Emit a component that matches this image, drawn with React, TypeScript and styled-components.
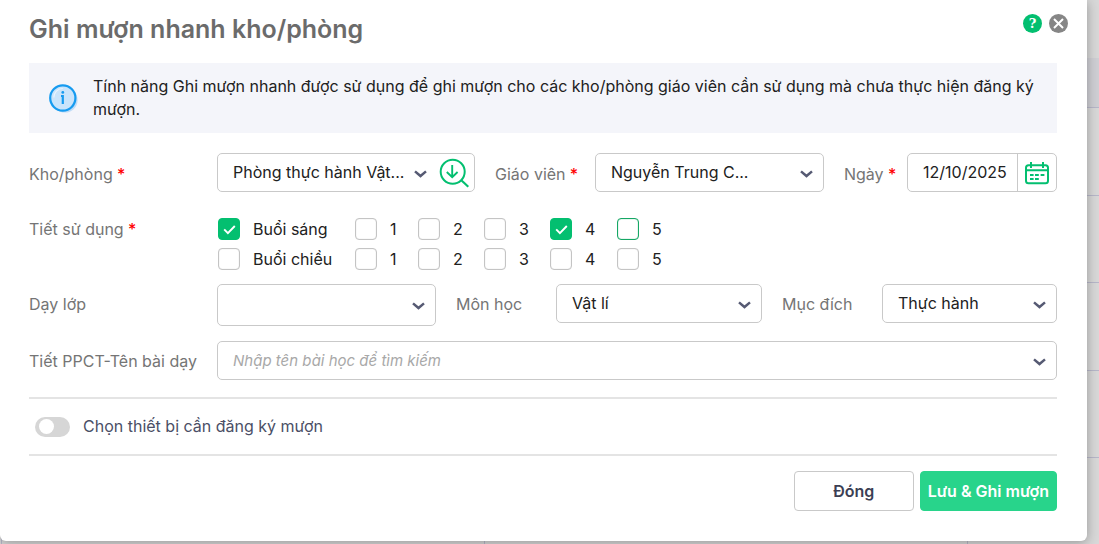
import React, { useState } from 'react';
import styled, { createGlobalStyle, css } from 'styled-components';

const green = '#03bf70';

const GlobalStyle = createGlobalStyle`
  *, *::before, *::after { box-sizing: border-box; }
  body {
    margin: 0;
    background: #d8d8d8;
    color: #212121;
    font: 16px/22px Inter, "Noto Sans", sans-serif;
  }
  button, input, select { font: inherit; color: inherit; }
`;

const Page = styled.div`
  display: grid;
  min-height: 100vh;
  grid-template-columns: minmax(0, 1fr);
  align-items: start;

  > * { grid-area: 1 / 1; }
`;

const Backdrop = styled.div`
  height: 100vh;
  padding-top: 58px;
  overflow: hidden;
`;

const BackdropHeader = styled.div`
  height: 50px;
  background: #cfcfd4;
  border-bottom: 1px solid #b7b7c9;
`;

const BackdropRow = styled.div`
  display: flex;
  height: 88px;
  padding-left: 1px;
  border-bottom: 1px solid #b7b7c9;

  &:nth-child(odd) { height: 87px; }
`;

const BackdropCell = styled.div`
  flex: 0 0 44%;
  border-left: 1px solid #b7b7c9;
`;

const Dialog = styled.form`
  position: relative;
  margin-right: 12px;
  padding: 12px 30px 30px 29px;
  background: #fff;
  border-radius: 0 0 6px 6px;
  box-shadow: 0 2px 12px rgba(0, 0, 0, 0.3);
`;

const Header = styled.header`
  display: flex;
  align-items: flex-start;
  justify-content: space-between;
  height: 51px;
`;

const Title = styled.h1`
  margin: 0;
  color: #6b6b6b;
  font-size: 25px;
  line-height: 34px;
  font-weight: 600;
`;

const HeaderActions = styled.div`
  display: flex;
  gap: 7px;
  padding-top: 2px;
  margin-right: -11px;
`;

const RoundButton = styled.button<{ $color: string }>`
  display: grid;
  place-items: center;
  width: 19px;
  height: 19px;
  padding: 0;
  border: 0;
  border-radius: 50%;
  background: ${(p) => p.$color};
  color: #fff;
  font: bold 13px/19px "DejaVu Serif", serif;
`;

const Notice = styled.section`
  display: flex;
  align-items: center;
  gap: 14px;
  padding: 12px 20px 12px 20px;
  background: #f4f5fa;

  svg { flex: none; }
`;

const NoticeText = styled.p`
  margin: 0;
  line-height: 23px;
`;

const FieldRow = styled.div<{ $columns: string }>`
  display: grid;
  grid-template-columns: 188px ${(p) => p.$columns};
  align-items: start;
`;

const FieldRows = styled.div`
  display: flex;
  flex-direction: column;
  gap: 15px;
  padding: 14px 0 16px;
`;

const FieldLabel = styled.label<{ $indent?: boolean }>`
  padding-left: ${(p) => (p.$indent ? 20 : 0)}px;
  color: #757575;
  line-height: 40px;
  white-space: nowrap;
`;

const TopFields = styled(FieldRow)`
  padding-top: 20px;

  > label { line-height: 42px; }
`;

const GroupLabel = styled(FieldLabel)`
  line-height: 22px;
`;

const Required = styled.span`
  color: #f00;
  font-weight: 500;
`;

const Control = styled.div<{ $tall?: boolean }>`
  position: relative;
  display: flex;
  height: ${(p) => (p.$tall ? 42 : 39)}px;
  border: 1px solid #c9c9c9;
  border-radius: 5px;
  background: #fff;
`;

const bareField = css`
  flex: 1;
  width: 100%;
  min-width: 0;
  padding: 0 0 1px 15px;
  border: 0;
  outline: 0;
  background: transparent;
`;

const Select = styled.select`
  ${bareField}
  appearance: none;
`;

const TextInput = styled.input`
  ${bareField}

  &::placeholder {
    color: #a8a8a8;
    font-size: 15px;
    font-style: italic;
    opacity: 1;
  }
`;

const Caret = styled.svg<{ $inset?: boolean }>`
  position: absolute;
  top: 50%;
  right: ${(p) => (p.$inset ? 47 : 10)}px;
  margin-top: -3px;
  pointer-events: none;
`;

const IconButton = styled.button<{ $divided?: boolean }>`
  display: grid;
  place-items: center;
  flex: none;
  width: ${(p) => (p.$divided ? 39 : 41)}px;
  padding: 1px 0 0;
  border: 0;
  border-left: ${(p) => (p.$divided ? '1px solid #c9c9c9' : '0')};
  background: transparent;
  color: ${green};
`;

const Periods = styled.div`
  display: grid;
  grid-template-columns: 137px 63px 66px 66px 67px max-content;
  row-gap: 8px;
  padding-left: 1px;
`;

const CheckLabel = styled.label`
  display: flex;
  align-items: center;
  gap: 13px;
  line-height: 20px;
  white-space: nowrap;
`;

const CheckBox = styled.input<{ $focused?: boolean }>`
  appearance: none;
  flex: none;
  width: 22px;
  height: 22px;
  margin: 0;
  border: 1px solid ${(p) => (p.$focused ? '#16a765' : '#c4c4c4')};
  border-radius: 4px;
  background: #fff;
  box-shadow: inset 0 0 1px ${(p) => (p.$focused ? '#16a765' : '#c4c4c4')};

  &:checked { border-color: ${green}; background: ${green}; box-shadow: none; }
`;

const CheckHolder = styled.span`
  position: relative;
  display: flex;

  svg {
    position: absolute;
    inset: 0;
    pointer-events: none;
  }
`;

const PeriodRow = styled(FieldRow)`
  padding-top: 23px;
`;

const DeviceBar = styled.section`
  display: flex;
  align-items: center;
  height: 59px;
  border: solid #e4e4e4;
  border-width: 2px 0;
  padding-left: 6px;
`;

const SwitchLabel = styled.label`
  display: flex;
  align-items: flex-start;
  gap: 13px;
  color: #4b4f66;
  line-height: 18px;
`;

const Switch = styled.input`
  appearance: none;
  display: flex;
  align-items: center;
  width: 35px;
  height: 20px;
  margin: 0;
  padding: 0 4px;
  border-radius: 10px;
  background: #d6d6d6;

  &::before {
    content: "";
    width: 15px;
    height: 15px;
    border-radius: 50%;
    background: #fff;
  }
  &:checked { background: ${green}; justify-content: flex-end; }
`;

const Footer = styled.footer`
  display: flex;
  justify-content: flex-end;
  gap: 6px;
  padding-top: 15px;
`;

const Button = styled.button<{ $primary?: boolean }>`
  min-width: 120px;
  height: 40px;
  padding: 0 7px;
  border: 1px solid ${(p) => (p.$primary ? '#28d48b' : '#c9c9c9')};
  border-radius: 4px;
  background: ${(p) => (p.$primary ? '#28d48b' : '#fff')};
  color: ${(p) => (p.$primary ? '#fff' : '#3c3f54')};
  font-weight: 600;
`;

const Chevron = ({ inset }: { inset?: boolean }) => (
  <Caret $inset={inset} width="13" height="8" viewBox="0 0 13 8" fill="none" stroke="#565a73" strokeWidth="2.5" aria-hidden="true">
    <path d="M1 1.4 6.5 6 12 1.4" />
  </Caret>
);

const Star = () => <Required> *</Required>;

interface DropDownProps {
  id: string;
  value: string;
  tall?: boolean;
}

const DropDown = ({ id, value, tall }: DropDownProps) => (
  <Control $tall={tall}>
    <Select id={id} defaultValue={value}>
      <option value={value}>{value}</option>
    </Select>
    <Chevron />
  </Control>
);

const InfoIcon = () => (
  <svg width="30" height="30" viewBox="0 0 30 30" aria-hidden="true">
    <circle cx="16" cy="17" r="12.6" fill="#bfdcf7" />
    <circle cx="13.8" cy="15" r="12.6" fill="#c9e4fb" stroke="#169bf0" strokeWidth="2.2" />
    <path d="M4.8 14.5a9 9 0 0 1 9-9" fill="none" stroke="#e8f4fe" strokeWidth="1.2" />
    <circle cx="13.8" cy="9.4" r="1.4" fill="#169bf0" />
    <path d="M12 13H13.8V21" fill="none" stroke="#169bf0" strokeWidth="2.2" />
  </svg>
);

const SearchDownIcon = () => (
  <svg width="30" height="30" viewBox="0 0 30 30" fill="none" stroke="currentColor" strokeWidth="2" aria-hidden="true">
    <circle cx="13.7" cy="13.7" r="12" />
    <path d="M22.3 22.3 29.3 28.8" strokeWidth="2.2" />
    <path d="M13.2 7V19.2M7.8 14 13.2 19.2 18.6 14" strokeWidth="1.9" />
  </svg>
);

const CalendarIcon = () => (
  <svg width="24" height="23" viewBox="0 0 24 23" fill="none" stroke="currentColor" strokeWidth="2" aria-hidden="true">
    <rect x="1" y="3.2" width="22" height="18" rx="2.5" />
    <path d="M1 8.3H23M6 0V6M18 0V6" />
    <path d="M5 13H8.6M10 13H13.8M15.6 13H19.4M5 17H8.6M10 17H13.8" strokeWidth="1.8" />
  </svg>
);

const sessions = [
  { name: 'Buổi sáng', key: 'am' },
  { name: 'Buổi chiều', key: 'pm' },
];
const periods = ['1', '2', '3', '4', '5'];

export default function App() {
  const [checked, setChecked] = useState<Record<string, boolean>>({ am: true, am4: true });

  const renderCheck = (key: string, text: string) => (
    <CheckLabel key={key}>
      <CheckHolder>
        <CheckBox
          type="checkbox"
          $focused={key === 'am5'}
          checked={!!checked[key]}
          onChange={(e) => setChecked({ ...checked, [key]: e.target.checked })}
        />
        {checked[key] && (
          <svg width="22" height="22" viewBox="0 0 22 22" fill="none" stroke="#fff" strokeWidth="1.9" aria-hidden="true">
            <path d="M6.2 11.4 9.9 15.2 16.8 8" />
          </svg>
        )}
      </CheckHolder>
      {text}
    </CheckLabel>
  );

  return (
    <Page>
      <GlobalStyle />
      <Backdrop aria-hidden="true">
        <BackdropHeader />
        {[1, 2, 3, 4, 5].map((n) => (
          <BackdropRow key={n}>
            <BackdropCell />
            <BackdropCell />
            <BackdropCell />
          </BackdropRow>
        ))}
      </Backdrop>

      <Dialog role="dialog" aria-labelledby="dialog-title" onSubmit={(e) => e.preventDefault()}>
        <Header>
          <Title id="dialog-title">Ghi mượn nhanh kho/phòng</Title>
          <HeaderActions>
            <RoundButton type="button" $color={green} aria-label="Trợ giúp">?</RoundButton>
            <RoundButton type="button" $color="#868686" aria-label="Đóng hộp thoại">
              <svg width="11" height="11" viewBox="0 0 11 11" stroke="#fff" strokeWidth="2" aria-hidden="true">
                <path d="M1 1 10 10M10 1 1 10" />
              </svg>
            </RoundButton>
          </HeaderActions>
        </Header>

        <Notice>
          <InfoIcon />
          <NoticeText>
            Tính năng Ghi mượn nhanh được sử dụng để ghi mượn cho các kho/phòng giáo viên cần sử dụng mà chưa thực hiện đăng ký mượn.
          </NoticeText>
        </Notice>

        <TopFields $columns="minmax(0, 258fr) 120px minmax(0, 229fr) 83px minmax(0, 150fr)">
          <FieldLabel htmlFor="room">Kho/phòng<Star /></FieldLabel>
          <Control>
            <Select id="room" defaultValue="room">
              <option value="room">Phòng thực hành Vật...</option>
            </Select>
            <Chevron inset />
            <IconButton type="button" aria-label="Tìm kho/phòng"><SearchDownIcon /></IconButton>
          </Control>
          <FieldLabel $indent htmlFor="teacher">Giáo viên<Star /></FieldLabel>
          <DropDown id="teacher" value="Nguyễn Trung C..." />
          <FieldLabel $indent htmlFor="date">Ngày<Star /></FieldLabel>
          <Control>
            <TextInput id="date" defaultValue="12/10/2025" />
            <IconButton $divided type="button" aria-label="Chọn ngày"><CalendarIcon /></IconButton>
          </Control>
        </TopFields>

        <PeriodRow $columns="minmax(0, 1fr)">
          <GroupLabel as="span" id="periods-label">Tiết sử dụng<Star /></GroupLabel>
          <Periods role="group" aria-labelledby="periods-label">
            {sessions.map((s) => (
              <React.Fragment key={s.key}>
                {renderCheck(s.key, s.name)}
                {periods.map((p) => renderCheck(s.key + p, p))}
              </React.Fragment>
            ))}
          </Periods>
        </PeriodRow>

        <FieldRows>
          <FieldRow $columns="minmax(0, 219fr) 120px minmax(0, 206fr) 120px minmax(0, 175fr)">
            <FieldLabel htmlFor="class">Dạy lớp</FieldLabel>
            <DropDown id="class" value="" tall />
            <FieldLabel $indent htmlFor="subject">Môn học</FieldLabel>
            <DropDown id="subject" value="Vật lí" />
            <FieldLabel $indent htmlFor="purpose">Mục đích</FieldLabel>
            <DropDown id="purpose" value="Thực hành" />
          </FieldRow>
          <FieldRow $columns="minmax(0, 1fr)">
            <FieldLabel htmlFor="lesson">Tiết PPCT-Tên bài dạy</FieldLabel>
            <Control>
              <TextInput id="lesson" placeholder="Nhập tên bài học để tìm kiếm" />
              <Chevron />
            </Control>
          </FieldRow>
        </FieldRows>

        <DeviceBar>
          <SwitchLabel>
            <Switch type="checkbox" role="switch" />
            Chọn thiết bị cần đăng ký mượn
          </SwitchLabel>
        </DeviceBar>

        <Footer>
          <Button type="button">Đóng</Button>
          <Button type="submit" $primary>Lưu &amp; Ghi mượn</Button>
        </Footer>
      </Dialog>
    </Page>
  );
}
